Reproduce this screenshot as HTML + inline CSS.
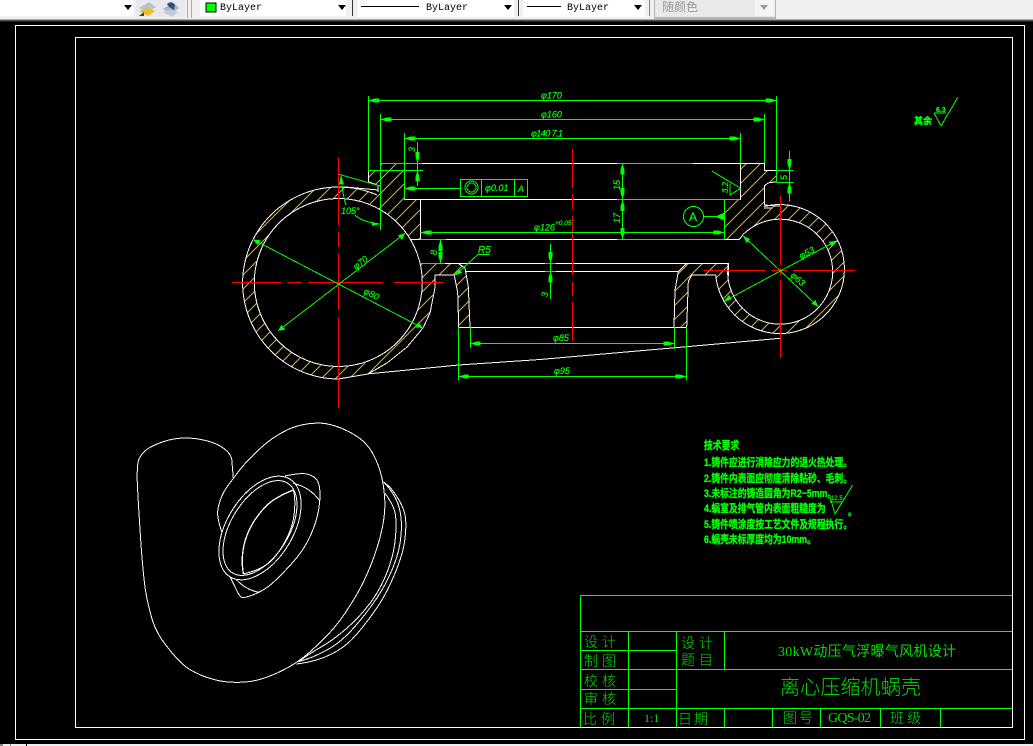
<!DOCTYPE html>
<html><head><meta charset="utf-8"><style>
html,body{margin:0;padding:0;background:#000;width:1033px;height:746px;overflow:hidden}
svg{position:absolute;left:0;top:0;display:block}
text{font-family:"Liberation Sans","Noto Sans CJK SC",sans-serif}
</style></head><body>
<svg width="1033" height="746" viewBox="0 0 1033 746" xmlns="http://www.w3.org/2000/svg">
<defs>
<pattern id="h" width="14" height="14" patternUnits="userSpaceOnUse">
<path d="M-1,15 L15,-1 M-7,7 L7,-7 M7,21 L21,7" stroke="#dcb430" stroke-width="1" fill="none"/>
</pattern>
</defs>
<rect width="1033" height="746" fill="#000"/>
<!-- toolbar -->
<g shape-rendering="crispEdges">
<rect width="1033" height="19" fill="#f0f0f0"/>
<rect y="19" width="1033" height="1" fill="#a8a8a8"/>
<rect y="20" width="1033" height="1" fill="#555"/>
<rect y="21" width="1033" height="1" fill="#222"/>
<rect width="134" height="16" fill="#fff"/>
<rect x="136" width="49" height="17" fill="#e8e8ee"/>
<rect x="187" width="1" height="18" fill="#aaa"/><rect x="191" width="1" height="18" fill="#aaa"/>
<rect x="200" width="146" height="16" fill="#fff"/>
<rect x="352" width="1" height="16" fill="#333"/>
<rect x="358" width="156" height="17" fill="#fff"/>
<rect x="518" width="1" height="16" fill="#333"/>
<rect x="523" width="122" height="17" fill="#fff"/>
<rect x="649" width="1" height="16" fill="#888"/>
<rect x="654" width="122" height="19" fill="#b8b8b8"/>
<rect x="655" width="120" height="17" fill="#e9e9e9"/>
<rect x="755" width="19" height="16" fill="#f4f4f4"/>
<rect x="206" y="3" width="10" height="9" fill="#00ff00" stroke="#000"/>
<rect x="361" y="6" width="58" height="1" fill="#000"/>
<rect x="527" y="6" width="34" height="1" fill="#000"/>
</g>
<path d="M124,5h8l-4,5z M338,5h8l-4,5z M504,5h8l-4,5z M634,5h8l-4,5z" fill="#000"/>
<path d="M760,5h8l-4,5z" fill="#999"/>
<path d="M139,8l10,-6 7,5 -9,6z" fill="#b8c4cc"/><path d="M139,11l9,5 7,-5 -8,-3z" fill="#e8c020"/>
<path d="M139,16l5,-4v4z" fill="#204080"/>
<path d="M163,9l10,-7 6,6 -8,6z" fill="#a8b8c8"/><path d="M163,12l9,5 6,-5 -8,-2z" fill="#c0ccd8"/>
<path d="M167,4q4,-4 8,1l-1,5 -5,-3z" fill="#305070"/>
<g font-size="10" fill="#000">
<text x="220" y="10" style="font-family:'Liberation Mono',monospace">ByLayer</text>
<text x="426" y="10" style="font-family:'Liberation Mono',monospace">ByLayer</text>
<text x="567" y="10" style="font-family:'Liberation Mono',monospace">ByLayer</text>
</g>
<text x="662" y="11" font-size="12" fill="#999">随颜色</text>
<!-- bottom strip -->
<g shape-rendering="crispEdges">
<rect y="744" width="1033" height="2" fill="#eeeeee"/>
<rect x="0" y="744" width="3" height="2" fill="#888"/><rect x="10" y="744" width="1" height="2" fill="#888"/>
<rect x="26" y="744" width="1" height="2" fill="#000"/>
</g>
<!-- frames -->
<g shape-rendering="crispEdges" fill="none" stroke="#fff" stroke-width="1">
<rect x="15.5" y="25.5" width="1009" height="714"/>
<rect x="75.5" y="37.5" width="937" height="690"/>
</g>
<!-- hatched regions -->
<g shape-rendering="crispEdges">
<path fill="url(#h)" d="M377,195 A96,96 0 1 0 338.3,379 L368,374 387,363 407,347 423,328 430,313 434,293 435,287 435,275 H454.3 L457.7,293 458.7,327.3 H470 L468.3,286.7 465,268 458.3,263.3 H420 A84,84 0 1 1 410,239.3 H420.7 V199.3 H404.3 V163.3 H380.3 V170.3 H368.3 V181.7 L380,186 Z"/>
<path fill="url(#h)" d="M724.3,199.3 H740.7 V163.3 H764.3 V170.3 H776.3 V181.7 L768,183 764.3,186 V206.5 A64.5,64.5 0 1 1 715.7,275 H691.7 L688.3,281.7 686.7,327.3 H674 L675,290 678.3,271.7 686.7,263.3 H728.3 A52.5,52.5 0 1 0 743.3,234.3 L739.3,239.3 H724.3 Z"/>
</g>
<!-- white outlines -->
<g shape-rendering="crispEdges" fill="none" stroke="#fff" stroke-width="1">
<circle cx="338.3" cy="282.5" r="84"/>
<path d="M380,186 L368.3,181.7 V170.3 H380.3 M404.5,163.5 V199.5 H420.7 V239.5 M404,199.5 H740.7 V163.5 M693,163.5 H764.3 V170.3 H776.3 V181.7 L768,183 764.3,186 V205 L780,206.2"/>
<path d="M405,163.5 H617"/>
<path d="M410,239.5 H739.3 L743.3,234.3"/>
<path d="M445,263.5 H728.3 V276"/>
<path d="M465,271.5 H678.3"/>
<path d="M458.7,327.5 H686.7"/>
<path d="M378,186 V192 M345,187 L378,190"/>
<path d="M377,195 A96,96 0 1 0 338.3,379 L368,374 387,363 407,347 423,328 430,313 434,293 435,287 V275 H454.3 L457.7,293 458.7,327.3"/>
<path d="M458.3,263.5 L465,268 468.3,286.7 470,327.3"/>
<path d="M366.7,374 L458.7,365 540,359.5 686.7,346.7 780,338.3"/>
<path d="M764.3,206.5 A64.5,64.5 0 1 1 715.7,275 H691.7 L688.3,281.7 686.7,327.3"/>
<path d="M686.7,263.5 L678.3,271.7 675,290 674,327.3"/>
<path d="M728.3,263.5 A52.5,52.5 0 1 0 743.3,234.3"/>
<path d="M764,208 H771.7"/>
</g>
<!-- red center lines -->
<g shape-rendering="crispEdges" stroke="#ff0000" stroke-width="1" fill="none">
<path d="M232,282.5H281M287,282.5H302M308,282.5H383M394,282.5H444"/>
<path d="M338.5,157V225M338.5,232V247M338.5,253V310M338.5,317V408"/>
<path d="M704,270.5H766M772,270.5H787M793,270.5H855"/>
<path d="M780.5,196V265M780.5,268V275M780.5,280V358"/>
<path d="M572.5,149V188M572.5,194V209M572.5,216V275M572.5,282V296M572.5,302V341"/>
</g>
<!-- green dims -->
<g shape-rendering="crispEdges" stroke="#00ff00" stroke-width="1" fill="none">
<path d="M368.5,96V170M776.5,96V182.7M368,100.5H777"/>
<path d="M380.5,114V230M764.5,114V163M380,119.5H765"/>
<path d="M404.5,133V199M740.5,133V163M404,138.5H741"/>
<path d="M417.5,142V186M380,163.5H422.7M368,170.5H423"/>
<rect x="460.5" y="179.5" width="67" height="17"/>
<path d="M481.5,179.5V196.5M514.5,179.5V196.5M404,188.5H460"/>
<path d="M420.7,232.5H724.3"/>
<path d="M440.5,240V263M420,263.5H445M420,239.5H446"/>
<path d="M489.3,254.5H478L454.3,275.7"/>
<path d="M470.5,327V348M674.5,327V349M470,343.5H674.5"/>
<path d="M458.5,327V380.5M686.5,327V380.7M458,376.5H687"/>
<path d="M550.5,244V299M545,263.5H556M545,271.5H556"/>
<path d="M622.5,163V239M617,163.5H693M617,199.5H740M617,239.5H724"/>
<path d="M711.7,171L740.7,188.3L730,195V183.3"/>
<path d="M724.5,199.5V239.5"/>
<circle cx="693.5" cy="216.5" r="10"/>
<path d="M703.3,216.5H716"/>
<path d="M789.5,151V201.7M776.3,170.5H793.7M776.3,182.5H793.7"/>
<path d="M339,174.3L380,186M342,186Q344,200 346,205M355,215Q362,222 380,224"/>
<path d="M278.3,330.7L405,233.3M252.7,239.3L423.3,328.3"/>
<path d="M723.3,301.7L836.7,240.7M743.3,236L818.3,306.7"/>
<circle cx="471.5" cy="187.5" r="6.5"/><circle cx="471.5" cy="187.5" r="4.5"/>
<path d="M830,497 L835,514 L852.7,485 M830,502H842"/>
<path d="M934,113H946M934,113L941,126L958,97"/>
</g>
<!-- arrows -->
<path fill="#00ff00" d="M368.5,100.5l6,-2h5v4h-5z M776.5,100.5l-6,-2h-5v4h5z
M380.5,119.5l6,-2h5v4h-5z M764.5,119.5l-6,-2h-5v4h5z
M404.5,138.5l6,-2h5v4h-5z M740.5,138.5l-6,-2h-5v4h5z
M417.5,163l-2,-6v-5h4v5z M417.5,170.5l-2,6v5h4v-5z
M404.5,188.5l6,-2h5v4h-5z
M420.7,232.5l6,-2h5v4h-5z M724.3,232.5l-6,-2h-5v4h5z
M440.5,240l-2,6v5h4v-5z M440.5,263l-2,-6v-5h4v5z
M454.3,275.7l4,-7 4,4z
M470.5,343.5l6,-2h4v4h-4z M674.5,343.5l-6,-2h-5v4h5z
M458.7,376.5l6,-2h4v4h-4z M686.3,376.5l-6,-2h-5v4h5z
M550.5,263l-2,-6v-5h4v5z M550.5,271.5l-2,6v5h4v-5z
M622.5,163.5l-2,6v5h4v-5z M622.5,199l-2,-6v-5h4v5z M622.5,200l-2,6v5h4v-5z M622.5,239l-2,-6v-5h4v5z
M724.3,212.5V220.5L715,216.7z
M789.5,170l-2,-6v-5h4v5z M789.5,182.5l-2,6v5h4v-5z
M341,174.5l-2,10 5,0z M380,224l-8,-2v4z
M278.3,330.7l3,-6 4,5z M405,233.3l-7,2 4,5z M252.7,239.3l8,1 -3,5z M423.3,328.3l-8,-1 3,-5z
M723.3,301.7l8,-2 -2,-5z M836.7,240.7l-8,1 3,5z M743.3,236l3,7 4,-4z M818.3,306.7l-3,-7 -4,4z"/>
<!-- dim text -->
<g fill="#00ff00" stroke="#00ff00" stroke-width=".2" font-size="9" font-style="italic">
<text x="541" y="98.5">φ170</text>
<text x="541" y="117.5">φ160</text>
<text x="531" y="136.5" textLength="32">φ140 7.1</text>
<text x="534" y="230.5">φ126</text>
<text x="555" y="225" font-size="6.5">+0.05</text>
<text x="553" y="341">φ85</text>
<text x="554" y="374">φ95</text>
<text x="478" y="253" font-size="10">R5</text>
<text x="341" y="214" font-size="9">105°</text>
<text x="485" y="191" font-size="9">φ0.01</text>
<text x="518" y="192" font-size="9">A</text>
<text x="689" y="221" font-size="12" font-style="normal">A</text>
<text transform="translate(356,270) rotate(-38)">φ70</text>
<text transform="translate(363,293) rotate(27)">φ80</text>
<text transform="translate(801,259) rotate(-27)">φ53</text>
<text transform="translate(790,276) rotate(42)">φ63</text>
<text transform="translate(415,152) rotate(-90)">3</text>
<text transform="translate(437,255) rotate(-90)">8</text>
<text transform="translate(548,297) rotate(-90)">3</text>
<text transform="translate(620,190) rotate(-90)">15</text>
<text transform="translate(620,223) rotate(-90)">17</text>
<text transform="translate(787,180) rotate(-90)">5</text>
<text transform="translate(728,193) rotate(-90)" font-size="8">3.2</text>
<text x="936" y="112" font-size="7" font-style="normal" font-weight="bold">6.3</text>
<text x="831" y="500" font-size="6" font-style="normal">12.5</text>
</g>
<text x="914" y="124" font-size="9" font-weight="bold" fill="#00ff00" stroke="#00ff00" stroke-width=".4" style="font-family:'Noto Sans CJK SC',sans-serif">其余</text>
<!-- tech requirements -->
<g fill="#00ff00" stroke="#00ff00" stroke-width=".35" font-size="11" font-weight="bold">
<text transform="translate(704,449) scale(.8,1)">技术要求</text>
<text transform="translate(704,466) scale(.8,1)">1.铸件应进行消除应力的退火热处理。</text>
<text transform="translate(704,482) scale(.8,1)">2.铸件内表面应彻底清除粘砂、毛刺。</text>
<text transform="translate(704,497) scale(.8,1)">3.未标注的铸造圆角为R2~5mm。</text>
<text transform="translate(704,512) scale(.8,1)">4.蜗室及排气管内表面粗糙度为</text>
<text transform="translate(848,515) scale(.8,1)">。</text>
<text transform="translate(704,528) scale(.8,1)">5.铸件喷涂度按工艺文件及规程执行。</text>
<text transform="translate(704,543) scale(.8,1)">6.蜗壳未标厚度均为10mm。</text>
</g>
<!-- 3D view -->
<g transform="translate(120,410) scale(.33333)" fill="none" stroke="#fff" stroke-width="3" stroke-linejoin="round" shape-rendering="crispEdges">
<path d="M340,205 L335,145 L330,135 Q325,125 307,112 Q290,100 255,91 Q220,83 190,84 Q160,85 130,95 Q100,105 82,117 Q65,130 57,147 Q50,165 52,222 Q55,280 62,390 Q70,500 77,545 Q85,590 97,630 Q110,670 135,702 Q160,735 180,755 Q200,775 225,787 Q250,800 280,808 Q310,817 350,817 Q390,817 420,808 Q450,800 490,780 Q530,760 565,730 Q600,700 630,667 Q660,635 690,587 Q720,540 740,495 Q760,450 772,410 Q785,370 791,330 Q797,290 793,252 Q790,215 780,182 Q770,150 755,125 Q740,100 715,82 Q690,65 660,53 Q630,42 610,40 Q590,38 560,42 Q530,47 505,58 Q480,70 455,87 Q430,105 400,135 Q370,165 355,185 L340,205 L325,225 Q310,245 301,270 Q292,295 293,315 Q295,335 305,365"/>
<ellipse cx="420" cy="354" rx="172" ry="99" transform="rotate(-58.5 420 354)"/>
<ellipse cx="420" cy="354" rx="158" ry="87" transform="rotate(-58.5 420 354)"/>
<path stroke-width="4" d="M370,492 L367,466 Q365,440 372,405 Q380,370 400,337 Q420,305 445,282 Q470,260 520,240"/>
<path d="M520,240 Q527,265 523,307 Q520,350 495,395 Q470,440 445,460 Q420,480 370,492"/>
<path d="M495,198 Q545,187 565,193 Q585,200 592,212 Q600,225 600,255 Q600,285 592,317 Q585,350 565,390 Q545,430 502,475 Q460,520 440,533 Q420,547 395,556 Q370,565 365,562 Q360,560 352,545 L330,500"/>
<path d="M520,220 Q570,232 597,270"/>
<path d="M350,510 Q380,542 420,547"/>
<path d="M790,215 L802,225 Q815,235 832,262 Q850,290 855,315 Q860,340 855,385 Q850,430 825,490 Q800,550 775,587 Q750,625 715,667 Q680,710 635,732 Q590,755 530,762"/>
<path d="M795,220 Q830,260 838,295 Q847,330 843,375 Q840,420 820,470 Q800,520 770,565 Q740,610 700,655 Q660,700 617,722 Q575,745 535,755"/>
<path d="M795,250 Q825,290 827,320 Q830,350 825,395 Q820,440 800,490 Q780,540 750,580 Q720,620 680,655 Q640,690 605,710 Q570,730 540,752"/>
</g>
<!-- title block -->
<g shape-rendering="crispEdges" stroke="#00ff00" stroke-width="1" fill="none">
<path d="M580.5,595.5H1012M580.5,631.5H1012M580.5,650.5H676.5M580.5,669.5H1012M580.5,689.5H676.5M580.5,708.5H1012"/>
<path d="M580.5,595.5V727M628.5,631.5V727M676.5,631.5V727M724.5,631.5V669.5M724.5,708.5V727M772.5,708.5V727M820.5,708.5V727M880.5,708.5V727M940.5,708.5V727"/>
</g>
<g fill="#00e000" style="font-family:'Noto Serif CJK SC',serif">
<g font-size="14">
<text x="584" y="647" style="font-family:'Noto Sans CJK SC',sans-serif" font-weight="300" textLength="32">设 计</text>
<text x="584" y="666" style="font-family:'Noto Sans CJK SC',sans-serif" font-weight="300" textLength="32">制 图</text>
<text x="584" y="686" style="font-family:'Noto Sans CJK SC',sans-serif" font-weight="300" textLength="32">校 核</text>
<text x="584" y="704" style="font-family:'Noto Sans CJK SC',sans-serif" font-weight="300" textLength="32">审 核</text>
<text x="583" y="724" style="font-family:'Noto Sans CJK SC',sans-serif" font-weight="300" textLength="32">比 例</text>
<text x="681" y="648" style="font-family:'Noto Sans CJK SC',sans-serif" font-weight="300" textLength="32">设 计</text>
<text x="681" y="665" style="font-family:'Noto Sans CJK SC',sans-serif" font-weight="300" textLength="32">题 目</text>
<text x="678" y="724" style="font-family:'Noto Sans CJK SC',sans-serif" font-weight="300" textLength="30">日 期</text>
<text x="783" y="723" style="font-family:'Noto Sans CJK SC',sans-serif" font-weight="300" textLength="30">图 号</text>
<text x="890" y="723" style="font-family:'Noto Sans CJK SC',sans-serif" font-weight="300" textLength="31">班 级</text>
<text x="778" y="656" style="font-family:'Liberation Serif','Noto Sans CJK SC',serif" textLength="178">30kW动压气浮曝气风机设计</text>
<text x="828" y="722" style="font-family:'Liberation Serif',serif" textLength="43">GQS-02</text>
</g>
<text x="644" y="722" font-size="12" style="font-family:'Liberation Serif',serif">1:1</text>
<text x="780" y="694" font-size="20" style="font-family:'Noto Sans CJK SC',sans-serif" font-weight="300" textLength="141">离心压缩机蜗壳</text>
</g>
</svg>
</body></html>
